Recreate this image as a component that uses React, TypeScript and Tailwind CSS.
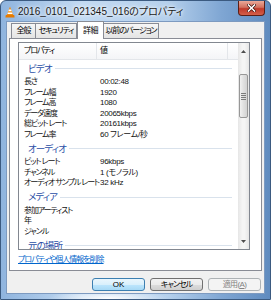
import React from "react";

const videoRows = [
  ["長さ", "00:02:48"],
  ["フレーム幅", "1920"],
  ["フレーム高", "1080"],
  ["データ速度", "20065kbps"],
  ["総ビット レート", "20161kbps"],
  ["フレーム率", "60 フレーム/秒"],
];

const audioRows = [
  ["ビット レート", "96kbps"],
  ["チャンネル", "1 (モノラル)"],
  ["オーディオ サンプル レート", "32 kHz"],
];

const mediaRows = [
  ["参加アーティスト", ""],
  ["年", ""],
  ["ジャンル", ""],
];

const Group = ({ title }: { title: string }) => (
  <div className="h-[17px] shrink-0 flex items-center pl-[9px] pr-[6px] gap-[3px]">
    <span className="text-[9.5px] leading-none text-[#2a4ea6] whitespace-nowrap tracking-[-0.9px]">{title}</span>
    <div className="flex-1 h-px bg-[#d9e2ec]" />
  </div>
);

const Row = ({ label, value }: { label: string; value: string }) => (
  <div className="h-[10.5px] shrink-0 flex items-center text-[8px] leading-none text-[#111]">
    <span className="w-[81px] shrink-0 pl-[5px] whitespace-nowrap tracking-[-1.1px]">{label}</span>
    <span className="whitespace-nowrap tracking-[-0.3px]">{value}</span>
  </div>
);

const Tab = ({ label, w, active }: { label: string; w: string; active?: boolean }) =>
  active ? (
    <div
      className={`${w} h-[18px] -mb-px relative z-10 flex items-center justify-center border border-b-0 border-[#898c95] bg-white text-[8px] leading-none tracking-[-0.6px]`}
    >
      {label}
    </div>
  ) : (
    <div
      className={`${w} h-[15px] -ml-px first:ml-0 flex items-center justify-center border border-b-0 border-[#898c95] bg-[linear-gradient(#f6f6f6,#e4e4e4)] text-[8px] leading-none tracking-[-1.1px] whitespace-nowrap`}
    >
      {label}
    </div>
  );

const VlcIcon = () => (
  <svg width="10" height="12" viewBox="0 0 10 12">
    <path d="M5 0.5 L8.2 9 L1.8 9 Z" fill="#f28c0f" />
    <path d="M3.9 3.5 L6.1 3.5 L6.7 5.2 L3.3 5.2 Z" fill="#fff" />
    <path d="M2.9 6.6 L7.1 6.6 L7.6 7.9 L2.4 7.9 Z" fill="#fff" />
    <path d="M0.8 9 L9.2 9 L9.6 11.5 L0.4 11.5 Z" fill="#e57a00" />
  </svg>
);

export default function App() {
  return (
    <div className="w-[271px] h-[300px] bg-white font-['Liberation_Sans','Noto_Sans_CJK_JP',sans-serif] [font-feature-settings:'palt'] text-black">
      <div className="w-[271px] h-[300px] flex flex-col rounded-t-[6px] border border-[#3b5a80] bg-[radial-gradient(ellipse_60px_10px_at_40%_100%,#ffffff,transparent),linear-gradient(90deg,#8fb4de,#c3daf2_30%,#b5d0ec_62%,#7fa6d3_82%,#5f8bbf)]">
        {/* title bar */}
        <div className="h-[21px] shrink-0 flex items-start">
          <div className="flex items-center h-[21px] pl-[4px] gap-[3px]">
            <VlcIcon />
            <span className="text-[10px] leading-none text-[#1a1a1a] [text-shadow:0_0_5px_#ffffff,0_0_3px_#ffffff] whitespace-nowrap">
              2016_0101_021345_016のプロパティ
            </span>
          </div>
          <div className="ml-auto mr-[5px] w-[27px] h-[15px] rounded-b-[4px] border border-t-0 border-[#5c1f16] bg-[linear-gradient(#eba999,#d2705f_45%,#c0392a_55%,#d4604a)] flex items-center justify-center">
            <svg width="9" height="8" viewBox="0 0 9 8">
              <path d="M1.5 1 L7.5 7 M7.5 1 L1.5 7" stroke="#3a0e08" strokeWidth="3" strokeLinecap="square" />
              <path d="M1.5 1 L7.5 7 M7.5 1 L1.5 7" stroke="#ffffff" strokeWidth="1.6" strokeLinecap="square" />
            </svg>
          </div>
        </div>

        {/* client area */}
        <div className="mx-[6px] h-[271px] shrink-0 flex flex-col bg-[#f0f0f0] shadow-[0_0_0_1px_#7d9ac0]">
          <div className="h-[16px] shrink-0 flex items-end pl-[4px]">
            <Tab label="全般" w="w-[25px]" />
            <Tab label="セキュリティ" w="w-[42px]" />
            <Tab label="詳細" w="w-[27px]" active />
            <Tab label="以前のバージョン" w="w-[56px]" />
          </div>

          <div className="mx-[2px] h-[233px] shrink-0 border border-[#898c95] bg-white pt-[3px] pl-[8px] flex flex-col">
            <div className="w-[232px] h-[208px] shrink-0 border border-[#828790] flex">
              <div className="flex-1 flex flex-col overflow-hidden">
                <div className="h-[17px] shrink-0 flex text-[8px] leading-none bg-[linear-gradient(#ffffff,#f4f5f7)] border-b border-[#e3e6ea]">
                  <div className="w-[78px] flex items-center pl-[5px] border-r border-[#e3e6ea] tracking-[-1.1px]">プロパティ</div>
                  <div className="w-[131px] flex items-center pl-[3px] border-r border-[#e3e6ea]">値</div>
                  <div className="flex-1" />
                </div>
                <Group title="ビデオ" />
                {videoRows.map(([l, v]) => (
                  <Row key={l} label={l} value={v} />
                ))}
                <Group title="オーディオ" />
                {audioRows.map(([l, v]) => (
                  <Row key={l} label={l} value={v} />
                ))}
                <Group title="メディア" />
                {mediaRows.map(([l, v]) => (
                  <Row key={l} label={l} value={v} />
                ))}
                <Group title="元の場所" />
              </div>

              {/* scrollbar */}
              <div className="w-[11px] shrink-0 flex flex-col bg-[linear-gradient(90deg,#e6e6e6,#f5f5f5_40%,#f5f5f5_60%,#e6e6e6)]">
                <div className="h-[16px] shrink-0 flex items-center justify-center">
                  <svg width="5" height="3" viewBox="0 0 5 3">
                    <path d="M0 3 L2.5 0 L5 3 Z" fill="#4d4d4d" />
                  </svg>
                </div>
                <div className="h-[15px] shrink-0" />
                <div className="h-[44px] shrink-0 mx-px rounded-[2px] border border-[#979797] bg-[linear-gradient(90deg,#f1f1f1,#e0e0e0_50%,#d2d2d2)] flex items-center justify-center">
                  <div className="w-[5px] flex flex-col gap-px">
                    <div className="h-px bg-[#7b7b7b]" />
                    <div className="h-px bg-[#7b7b7b]" />
                    <div className="h-px bg-[#7b7b7b]" />
                    <div className="h-px bg-[#7b7b7b]" />
                  </div>
                </div>
                <div className="flex-1" />
                <div className="h-[16px] shrink-0 flex items-center justify-center">
                  <svg width="5" height="3" viewBox="0 0 5 3">
                    <path d="M0 0 L5 0 L2.5 3 Z" fill="#4d4d4d" />
                  </svg>
                </div>
              </div>
            </div>
            <div className="mt-[4px] text-[8px] leading-[11px] text-[#0066cc] underline tracking-[-1px] whitespace-nowrap">
              プロパティや個人情報を削除
            </div>
          </div>

          <div className="mt-[7px] flex justify-end gap-[5px] pr-[3px]">
            <div className="w-[53px] h-[13px] rounded-[3px] border border-[#3c7fb1] bg-[linear-gradient(#eaf6fd,#d9f0fc_50%,#bee6fd_50%,#a7d9f5)] flex items-center justify-center text-[8px] leading-none">
              OK
            </div>
            <div className="w-[53px] h-[13px] rounded-[3px] border border-[#707070] bg-[linear-gradient(#f2f2f2,#ebebeb_50%,#dddddd_50%,#cfcfcf)] flex items-center justify-center text-[8px] leading-none tracking-[-1px]">
              キャンセル
            </div>
            <div className="w-[53px] h-[13px] rounded-[3px] border border-[#adb2b5] bg-[#f4f4f4] flex items-center justify-center text-[8px] leading-none text-[#838383] tracking-[-0.6px]">
              適用(<span className="underline">A</span>)
            </div>
          </div>
        </div>
      </div>
    </div>
  );
}
